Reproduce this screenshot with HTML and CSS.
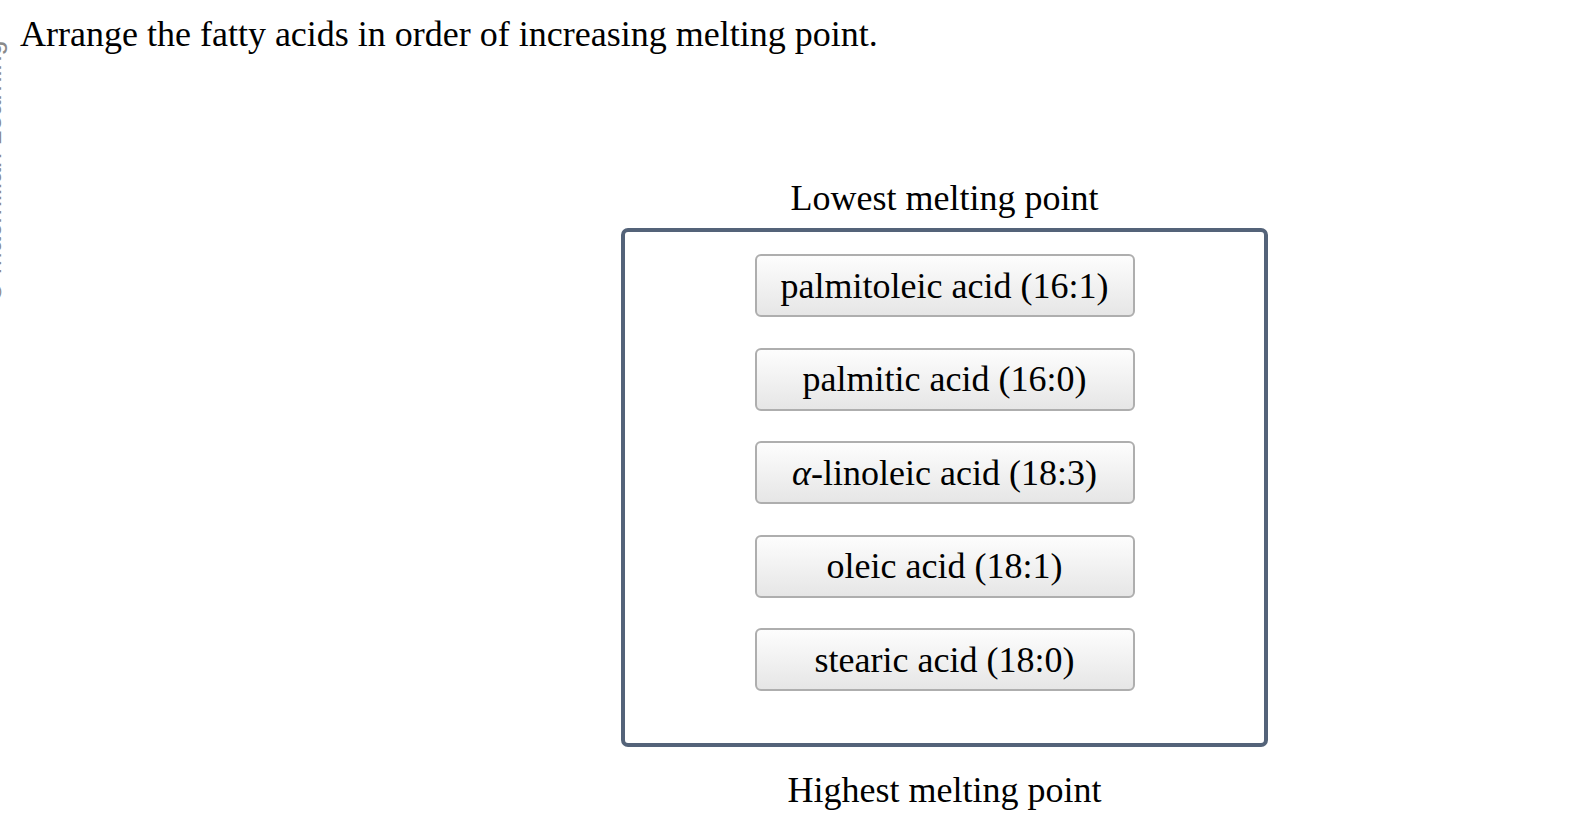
FILE: index.html
```html
<!DOCTYPE html>
<html>
<head>
<title>Order the fatty acids</title>
<link rel="stylesheet" href="styles.css">
</head>
<body>

<div class="watermark">© Macmillan Learning</div>

<div class="page">
  <p class="prompt">Arrange the fatty acids in order of increasing melting point.</p>

  <div class="sorter">
    <div class="end-label">Lowest melting point</div>
    <div class="sort-box" id="sortBox">
      <div class="item">palmitoleic acid (16:1)</div>
      <div class="item">palmitic acid (16:0)</div>
      <div class="item"><i>α</i>-linoleic acid (18:3)</div>
      <div class="item">oleic acid (18:1)</div>
      <div class="item">stearic acid (18:0)</div>
    </div>
    <div class="end-label">Highest melting point</div>
  </div>
</div>

</body>
</html>
```

FILE: styles.css
```css
body {
  margin: 0;
  background: #ffffff;
  color: #000;
  font-family: "Liberation Serif", "Times New Roman", serif;
}

.watermark {
  position: absolute;
  left: -23px;
  top: 302px;
  transform-origin: left top;
  transform: rotate(-90deg);
  white-space: nowrap;
  font-family: "Liberation Sans", Arial, sans-serif;
  font-size: 27px;
  color: #8a8a8a;
}

.page {
  padding: 14px 20px;
}

.prompt {
  margin: 0;
  font-size: 36px;
  line-height: 40px;
}

.sorter {
  width: 647px;
  margin: 124px 0 0 601px;
}

.end-label {
  text-align: center;
  font-size: 36px;
  line-height: 40px;
}

.sort-box {
  display: flex;
  flex-direction: column;
  align-items: center;
  gap: 30.5px;
  margin: 10px 0 23px;
  padding: 22px 0 52px;
  border: 4px solid #546379;
  border-radius: 7px;
}

.item {
  box-sizing: border-box;
  width: 380px;
  height: 63px;
  display: flex;
  justify-content: center;
  align-items: center;
  font-size: 36px;
  line-height: 40px;
  border: 2px solid #aeaeae;
  border-radius: 6px;
  background: linear-gradient(#fdfdfd, #e6e6e6);
  cursor: move;
}
```
